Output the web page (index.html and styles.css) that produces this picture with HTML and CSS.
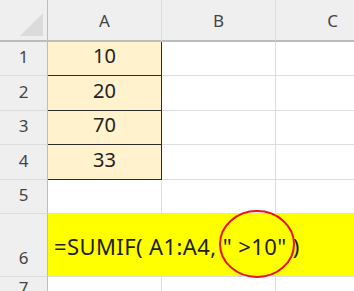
FILE: index.html
```html
<!DOCTYPE html>
<html lang="en">
<head>
  <meta charset="UTF-8">
  <title>SUMIF</title>
  <link rel="stylesheet" href="styles.css">
</head>
<body>
  <div class="sheet">
    <div class="corner"><span class="corner-tri"></span></div>
    <div class="col-head">A</div>
    <div class="col-head">B</div>
    <div class="col-head">C</div>

    <div class="row-head">1</div>
    <div class="cell val">10</div>
    <div class="cell"></div>
    <div class="cell"></div>

    <div class="row-head">2</div>
    <div class="cell val">20</div>
    <div class="cell"></div>
    <div class="cell"></div>

    <div class="row-head">3</div>
    <div class="cell val">70</div>
    <div class="cell"></div>
    <div class="cell"></div>

    <div class="row-head">4</div>
    <div class="cell val">33</div>
    <div class="cell"></div>
    <div class="cell"></div>

    <div class="row-head">5</div>
    <div class="cell"></div>
    <div class="cell"></div>
    <div class="cell"></div>

    <div class="row-head">6</div>
    <div class="cell formula">=SUMIF( A1:A4, " &gt;10" )</div>

    <div class="row-head">7</div>
    <div class="cell"></div>
    <div class="cell"></div>
    <div class="cell"></div>
  </div>

  <!-- circle round the criteria argument -->
  <svg class="mark" width="80" height="72" viewBox="0 0 80 72">
    <ellipse cx="40" cy="36" rx="37" ry="33" fill="none" stroke="#e8141b" stroke-width="2"/>
  </svg>
</body>
</html>
```

FILE: styles.css
```css
body {
  margin: 0;
  overflow: hidden;
  background: #fff;
  font-family: 'Noto Sans', 'Open Sans', sans-serif;
}
.sheet {
  display: grid;
  grid-template-columns: 48px 114px 114px 114px;
  grid-template-rows: 42px 34px 35px 34px 35px 34px 63px 30px;
  width: 390px;
}
.corner,
.col-head,
.row-head {
  box-sizing: border-box;
  background: #efefef;
  color: #444;
}
.corner {
  border-right: 1px solid #bcbcbc;
  border-bottom: 2px solid #bcbcbc;
  position: relative;
}
.corner-tri {
  position: absolute;
  left: 20px;
  top: 13px;
  width: 0;
  height: 0;
  border-left: 23px solid transparent;
  border-bottom: 23px solid #dbdbdb;
}
.col-head {
  display: flex;
  align-items: center;
  justify-content: center;
  font-size: 17px;
  padding-top: 1px;
  border-right: 1px solid #dcdcdc;
  border-bottom: 2px solid #bcbcbc;
}
.row-head {
  display: flex;
  align-items: flex-end;
  justify-content: center;
  font-size: 17px;
  padding-bottom: 7px;
  border-right: 1px solid #bcbcbc;
  border-bottom: 1px solid #dcdcdc;
}
.cell {
  box-sizing: border-box;
  border-right: 1px solid #dedede;
  border-bottom: 1px solid #dedede;
}
.val {
  display: flex;
  align-items: flex-end;
  justify-content: center;
  padding-bottom: 6px;
  background: #fff2cc;
  color: #222;
  font-size: 20px;
  border-right-color: #2b2b2b;
  border-bottom-color: #2b2b2b;
}
.formula {
  grid-column: 2 / -1;
  display: flex;
  align-items: center;
  padding-left: 6px;
  padding-top: 2px;
  background: #ffff00;
  color: #1e1e1e;
  font-size: 22px;
  letter-spacing: 0.4px;
  white-space: pre;
  border-right: none;
  border-bottom-color: #dedede;
}
.mark {
  position: absolute;
  left: 217px;
  top: 208px;
}
```
